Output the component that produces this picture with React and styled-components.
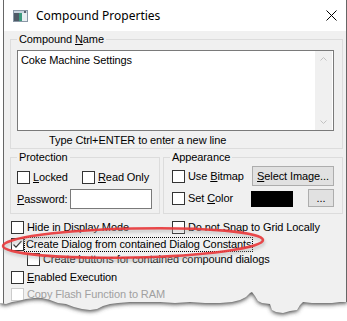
import React from "react";
import styled, { createGlobalStyle } from "styled-components";

const GlobalStyle = createGlobalStyle`
  html, body {
    margin: 0;
    padding: 0;
    background: #fff;
  }
  body {
    font-family: "Liberation Sans", Arial, sans-serif;
    font-size: 11px;
    letter-spacing: -0.1px;
    color: #000;
  }
  * { box-sizing: border-box; }
`;

const Page = styled.div`
  position: relative;
  width: 347px;
  height: 321px;
  overflow: hidden;
  background: #fff;
`;

const Window = styled.div`
  margin-left: 3px;
  width: 344px;
  height: 321px;
  border-left: 1px solid #666;
  border-right: 1px solid #666;
  background: #f0f0f0;
  display: flex;
  flex-direction: column;
`;

const TitleBar = styled.div`
  height: 31px;
  flex: none;
  background: #fff;
  display: flex;
  align-items: center;
  gap: 8px;
  padding: 0 9px;
  font-family: "Noto Sans", "Open Sans", sans-serif;
  font-size: 12px;
  letter-spacing: 0;
`;

const Title = styled.span`
  flex: 1;
`;

const Body = styled.div`
  padding: 2px 3px 0 6px;
  display: flex;
  flex-direction: column;
`;

const GroupBox = styled.fieldset`
  margin: 0;
  min-width: 0;
  border: 1px solid #dcdcdc;
  padding: ${p => p.$pad};
  flex: ${p => p.$flex || "none"};
  width: ${p => (p.$w ? `${p.$w}px` : "auto")};
`;

const Legend = styled.legend`
  padding: 0 2px;
  margin-left: ${p => p.$shift || 0}px;
  line-height: 13px;
`;

const U = styled.span`
  text-decoration: underline;
`;

const TextBox = styled.div`
  width: 317px;
  height: 81px;
  border: 1px solid #7a7a7a;
  background: #fff;
  display: flex;
`;

const TextContent = styled.div`
  flex: 1;
  padding: 3px 3px;
  line-height: 13px;
`;

const ScrollTrack = styled.div`
  width: 17px;
  margin-right: 1px;
  background: #f0f0f0;
  display: flex;
  flex-direction: column;
  justify-content: space-between;
  align-items: center;
  padding: 6px 0;
`;

const Hint = styled.div`
  padding-left: 32px;
  margin-top: 3px;
  line-height: 13px;
`;

const GroupRow = styled.div`
  display: flex;
  gap: 3px;
  margin-top: 2px;
`;

const Line = styled.div`
  display: flex;
  align-items: center;
  margin-top: ${p => p.$mt || 0}px;
  padding-left: ${p => p.$indent || 0}px;
  min-height: 13px;
`;

const CheckItem = styled.div`
  display: flex;
  align-items: center;
  gap: 3px;
  width: ${p => (p.$w ? `${p.$w}px` : "auto")};
  flex: none;
  line-height: 13px;
  color: ${p => (p.$disabled ? "#a0a0a0" : "#000")};
`;

const Box = styled.span`
  width: 13px;
  height: 13px;
  flex: none;
  border: 1px solid ${p => (p.$disabled ? "#cccccc" : "#333333")};
  background: #fff;
  display: flex;
  align-items: center;
  justify-content: center;
`;

const FocusLabel = styled.span`
  outline: 1px dotted #000;
  outline-offset: 0;
  padding: 0 1px;
  margin-left: -2px;
`;

const Field = styled.span`
  width: 82px;
  height: 20px;
  border: 1px solid #7a7a7a;
  background: #fff;
  margin-left: auto;
`;

const Button = styled.button`
  height: ${p => p.$h}px;
  width: ${p => p.$w}px;
  background: #e1e1e1;
  border: 1px solid #adadad;
  font-family: "Liberation Sans", Arial, sans-serif;
  font-size: 11px;
  letter-spacing: -0.1px;
  color: #000;
  padding: 0;
  margin-left: ${p => p.$ml || "0"};
`;

const Swatch = styled.span`
  width: 42px;
  height: 16px;
  background: #000;
  margin-top: 2px;
`;

const Overlay = styled.svg`
  position: absolute;
  left: 0;
  top: ${p => p.$top}px;
  pointer-events: none;
`;

function Check({ checked, disabled, children, w }) {
  return (
    <CheckItem $w={w} $disabled={disabled}>
      <Box $disabled={disabled}>
        {checked && (
          <svg width="11" height="11" viewBox="0 0 11 11">
            <path d="M1.5 5.5 L4 8.2 L9.5 2" fill="none" stroke="#333" strokeWidth="1.2" />
          </svg>
        )}
      </Box>
      {children}
    </CheckItem>
  );
}

function AppIcon() {
  return (
    <svg width="15" height="12" viewBox="0 0 15 12">
      <rect x="0.5" y="0.5" width="14" height="11" fill="#e9eef2" stroke="#8a98a6" />
      <rect x="1" y="1" width="13" height="2" fill="#c9d4de" />
      <rect x="1" y="3" width="5" height="8" fill="#4f5a66" />
      <rect x="6" y="3" width="3" height="8" fill="#3d9a7f" />
      <rect x="11" y="1" width="2" height="2" fill="#5b6672" />
    </svg>
  );
}

const edge = [
  [0, 303], [6, 304], [12, 302], [18, 301], [26, 299], [34, 298], [42, 298],
  [50, 300], [58, 303], [66, 304], [74, 307], [82, 309], [90, 310], [97, 309],
  [103, 306], [110, 304], [118, 303], [130, 302], [145, 302], [160, 302],
  [175, 303], [190, 302], [205, 303], [220, 303], [232, 302], [240, 300],
  [246, 297], [250, 293], [252, 292], [255, 296], [258, 301], [262, 303],
  [270, 304], [272, 310], [276, 312], [283, 313], [290, 311], [297, 310],
  [300, 305], [303, 302], [312, 303], [322, 303], [332, 303], [340, 302], [347, 302],
];

function Tear() {
  const top = 285;
  const pts = edge.map(([x, y]) => `${x},${y - top}`).join(" L");
  const lower = `M${pts} L347,40 L0,40 Z`;
  const upper = `M0,-10 L${pts} L347,-10 Z`;
  return (
    <Overlay $top={top} width="347" height="36" viewBox="0 0 347 36">
      <defs>
        <filter id="tearBlur" x="-5%" y="-50%" width="110%" height="200%">
          <feGaussianBlur stdDeviation="2.2" />
        </filter>
        <clipPath id="tearClip">
          <path d={lower} />
        </clipPath>
      </defs>
      <path d={lower} fill="#fff" />
      <g clipPath="url(#tearClip)">
        <path d={upper} fill="#444" filter="url(#tearBlur)" transform="translate(0,1.5)" />
      </g>
    </Overlay>
  );
}

function Highlight() {
  return (
    <Overlay $top={222} width="275" height="45" viewBox="0 222 275 45">
      <defs>
        <filter id="ringGlow" x="-5%" y="-30%" width="110%" height="160%">
          <feGaussianBlur stdDeviation="1.5" />
        </filter>
      </defs>
      <g transform="rotate(-1.3 133 243)">
        <ellipse cx="133" cy="244" rx="130" ry="14.5" fill="none" stroke="#b0b0b0" strokeWidth="3" opacity="0.6" filter="url(#ringGlow)" transform="translate(1,1.5)" />
        <ellipse cx="133" cy="243" rx="130" ry="14.5" fill="none" stroke="#e8393c" strokeWidth="2.6" opacity="0.92" />
      </g>
    </Overlay>
  );
}

function Chevron({ down }) {
  return (
    <svg width="7" height="4" viewBox="0 0 7 4">
      <path d={down ? "M0.5 0.5 L3.5 3.5 L6.5 0.5" : "M0.5 3.5 L3.5 0.5 L6.5 3.5"} fill="none" stroke="#c2c2c2" />
    </svg>
  );
}

export default function App() {
  return (
    <Page>
      <GlobalStyle />
      <Window>
        <TitleBar>
          <AppIcon />
          <Title>Compound Properties</Title>
          <svg width="11" height="11" viewBox="0 0 11 11">
            <path d="M0.5 0.5 L10.5 10.5 M10.5 0.5 L0.5 10.5" stroke="#000" strokeWidth="1" />
          </svg>
        </TitleBar>
        <Body>
          <GroupBox $pad="4px 8px 1px 6px">
            <Legend>Compound <U>N</U>ame</Legend>
            <TextBox>
              <TextContent>Coke Machine Settings</TextContent>
              <ScrollTrack>
                <Chevron />
                <Chevron down />
              </ScrollTrack>
            </TextBox>
            <Hint>Type Ctrl+ENTER to enter a new line</Hint>
          </GroupBox>

          <GroupRow>
            <GroupBox $w={150} $pad="7px 7px 4px 6px">
              <Legend>Protection</Legend>
              <Line>
                <Check w={65}><span><U>L</U>ocked</span></Check>
                <Check><span><U>R</U>ead Only</span></Check>
              </Line>
              <Line $mt={5}>
                <span><U>P</U>assword:</span>
                <Field />
              </Line>
            </GroupBox>

            <GroupBox $flex="1" $pad="2px 8px 6px 8px">
              <Legend $shift={-2}>Appearance</Legend>
              <Line>
                <Check w={80}><span>Use <U>B</U>itmap</span></Check>
                <Button $w={82} $h={20} $ml="auto"><U>S</U>elect Image...</Button>
              </Line>
              <Line $mt={3}>
                <Check w={79}><span>Set <U>C</U>olor</span></Check>
                <Swatch />
                <Button $w={26} $h={18} $ml="auto">...</Button>
              </Line>
            </GroupBox>
          </GroupRow>

          <Line $mt={7} $indent={1}>
            <Check w={161}><span>Hide in Display Mode</span></Check>
            <Check><span>Do not Snap to Grid Locally</span></Check>
          </Line>
          <Line $mt={4} $indent={1}>
            <Check checked><FocusLabel>Create Dialog from contained Dialog Constants</FocusLabel></Check>
          </Line>
          <Line $mt={2} $indent={17}>
            <Check><span>Create buttons for contained compound dialogs</span></Check>
          </Line>
          <Line $mt={5} $indent={1}>
            <Check><span><U>E</U>nabled Execution</span></Check>
          </Line>
          <Line $mt={4} $indent={1}>
            <Check disabled><span>Copy Flash Function to RAM</span></Check>
          </Line>
          <Line $mt={4} $indent={1}>
            <Check><span>Persistent</span></Check>
          </Line>
        </Body>
      </Window>
      <Highlight />
      <Tear />
    </Page>
  );
}
